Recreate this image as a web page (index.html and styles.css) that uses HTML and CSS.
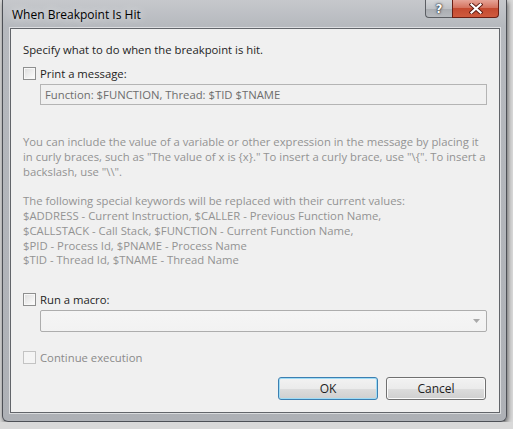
FILE: index.html
```html
<!DOCTYPE html>
<html lang="en">
<head>
    <meta charset="UTF-8">
    <title>When Breakpoint Is Hit</title>
    <link rel="stylesheet" href="styles.css">
</head>
<body>

    <div class="window">
        <div class="titlebar">
            <span class="title">When Breakpoint Is Hit</span>
            <div class="caption-buttons">
                <span class="cap-btn cap-help">?</span>
                <span class="cap-btn cap-close">
                    <svg width="14" height="11" viewBox="0 0 14 11">
                        <path d="M2.5 1.5 L11.5 9.5 M11.5 1.5 L2.5 9.5" stroke="#5a1a12" stroke-width="4" stroke-linecap="square"/>
                        <path d="M2.5 1.5 L11.5 9.5 M11.5 1.5 L2.5 9.5" stroke="#ffffff" stroke-width="2.2" stroke-linecap="square"/>
                    </svg>
                </span>
            </div>
        </div>

        <div class="client">
            <p class="intro">Specify what to do when the breakpoint is hit.</p>

            <label class="check-row"><span class="checkbox"></span>Print a message:</label>
            <div class="textbox">Function: $FUNCTION, Thread: $TID $TNAME</div>

            <div class="help">
                <p>You can include the value of a variable or other expression in the message by placing it<br>
                in curly braces, such as "The value of x is {x}." To insert a curly brace, use "\{". To insert a<br>
                backslash, use "\\".</p>
                <p>The following special keywords will be replaced with their current values:<br>
                $ADDRESS - Current Instruction, $CALLER - Previous Function Name,<br>
                $CALLSTACK - Call Stack, $FUNCTION - Current Function Name,<br>
                $PID - Process Id, $PNAME - Process Name<br>
                $TID - Thread Id, $TNAME - Thread Name</p>
            </div>

            <label class="check-row run-macro"><span class="checkbox"></span>Run a macro:</label>
            <div class="combo">
                <svg class="combo-arrow" width="7" height="4" viewBox="0 0 7 4">
                    <path d="M0 0 H7 L3.5 4 Z" fill="#a9a9a9"/>
                </svg>
            </div>

            <label class="check-row disabled continue"><span class="checkbox"></span>Continue execution</label>

            <div class="buttons">
                <button class="btn btn-default">OK</button>
                <button class="btn">Cancel</button>
            </div>
        </div>
    </div>

</body>
</html>
```

FILE: styles.css
```css
body {
    margin: 0;
    padding: 0 0 0 2px;
    background-color: #d9d9d9;
    font-family: "Open Sans", "Noto Sans", sans-serif;
    font-size: 11.3px;
    color: #1e1e1e;
}

.window {
    width: 490px;
    height: 421px;
    border: 1px solid #4d5056;
    border-top: none;
    border-radius: 0 0 6px 6px;
    padding: 0 6px 0 7px;
    background: linear-gradient(180deg, #c6c8cc 0, #b6b9be 26px, #aeb1b6 100%);
    box-shadow: 1px 2px 5px rgba(0, 0, 0, 0.55);
}

.titlebar {
    height: 28px;
    display: flex;
    align-items: flex-start;
    justify-content: space-between;
    margin-right: -6px;
}

.title {
    padding: 6px 0 0 2px;
    font-size: 12px;
    color: #000;
    text-shadow: 0 0 8px rgba(255, 255, 255, 0.9);
}

.caption-buttons {
    display: flex;
    margin-right: 7px;
}

.cap-btn {
    height: 18px;
    display: flex;
    align-items: center;
    justify-content: center;
    border: 1px solid #5b5e63;
    border-top: none;
    box-sizing: border-box;
}

.cap-help {
    width: 27px;
    border-radius: 0 0 0 4px;
    border-right: none;
    background: linear-gradient(180deg, #d3d5d8 0, #bfc2c6 50%, #a9acb1 51%, #b7babe 100%);
    color: #fff;
    font-family: "DejaVu Sans", sans-serif;
    font-weight: bold;
    font-size: 12px;
    text-shadow: 0 0 1px #2e3136, 0 0 1px #2e3136, 0 0 3px #2e3136;
}

.cap-close {
    width: 47px;
    border-radius: 0 0 4px 0;
    border-color: #6b1f14;
    background: linear-gradient(180deg, #e6a497 0, #d5735f 45%, #c44a30 50%, #cf5a3e 100%);
}

.client {
    height: 383px;
    background-color: #f0f0f0;
    border: 1px solid #62656a;
    box-shadow: 0 0 0 1px rgba(255, 255, 255, 0.55);
    padding: 0 12px;
    display: flex;
    flex-direction: column;
    align-items: stretch;
}

.intro {
    margin: 13px 0 0;
    line-height: 15px;
}

.check-row {
    display: flex;
    align-items: center;
    height: 15px;
    line-height: 15px;
    margin-top: 9px;
}

.checkbox {
    width: 13px;
    height: 13px;
    box-sizing: border-box;
    border: 1px solid #8e8f8f;
    background: linear-gradient(135deg, #dcdcdc 0, #f4f4f4 70%, #ffffff 100%);
    box-shadow: inset 0 0 0 1px #f8f8f8;
    margin-right: 4px;
    flex-shrink: 0;
}

.textbox {
    margin: 3px 0 0 17px;
    height: 21px;
    box-sizing: border-box;
    border: 1px solid #b4b4b4;
    background-color: #f0f0f0;
    color: #6d6d6d;
    padding-left: 4px;
    line-height: 19px;
}

.help {
    margin-top: 30px;
    color: #939393;
    line-height: 14.8px;
    white-space: nowrap;
}

.help p {
    margin: 0 0 14.8px;
}

.help p:last-child {
    margin-bottom: 0;
}

.run-macro {
    margin-top: 24px;
}

.combo {
    margin: 3px 0 0 17px;
    height: 22px;
    box-sizing: border-box;
    border: 1px solid #adadad;
    border-radius: 2px;
    background: linear-gradient(180deg, #f5f5f5 0, #f2f2f2 100%);
    display: flex;
    align-items: center;
    justify-content: flex-end;
    padding-right: 6px;
}

.continue {
    margin-top: 18px;
}

.disabled {
    color: #8a8a8a;
}

.disabled .checkbox {
    border-color: #c3c3c3;
    background: #f4f4f4;
    box-shadow: none;
}

.buttons {
    display: flex;
    justify-content: flex-end;
    gap: 8px;
    margin: 12px 1px 0 0;
}

.btn {
    width: 100px;
    height: 23px;
    border: 1px solid #707070;
    border-radius: 3px;
    background: linear-gradient(180deg, #f2f2f2 0, #ebebeb 50%, #dddddd 51%, #cfcfcf 100%);
    box-shadow: inset 0 0 0 1px #fbfbfb;
    font-family: inherit;
    font-size: 12px;
    color: #1e1e1e;
    padding: 0;
}

.btn-default {
    border-color: #3c7fb1;
    box-shadow: inset 0 0 0 1px #9fdcf6;
}
```
